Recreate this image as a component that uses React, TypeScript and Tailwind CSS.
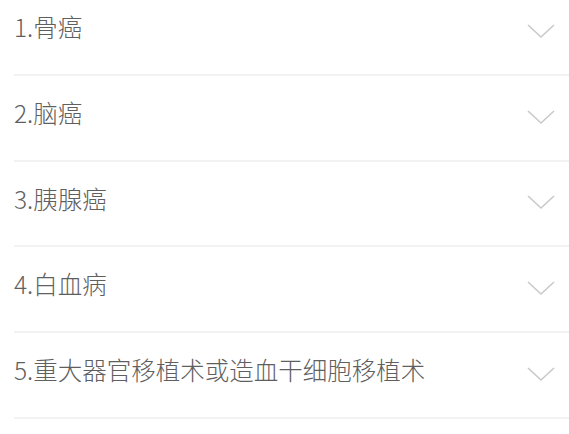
const ITEMS = ['1.骨癌', '2.脑癌', '3.胰腺癌', '4.白血病', '5.重大器官移植术或造血干细胞移植术']

export default function App() {
  return (
    <div className="h-[434px] w-[569px] overflow-hidden bg-white font-['Noto_Sans_CJK_SC',sans-serif]">
      <div className="-mt-[10px] pl-[14px]">
        {ITEMS.map(item => (
          <div key={item} className="flex h-[85.75px] items-center justify-between border-b-2 border-[#f2f2f2] pr-[13px]">
            <span className="mb-[9px] text-[24.5px] font-light leading-none text-[#5f5f5f]">{item}</span>
            <svg width="30" height="16" viewBox="0 0 30 16" fill="none" className="mb-[2px]">
              <path d="M2 2 L15 14 L28 2" stroke="#c9c9c9" strokeWidth="1.6" />
            </svg>
          </div>
        ))}
      </div>
    </div>
  )
}
